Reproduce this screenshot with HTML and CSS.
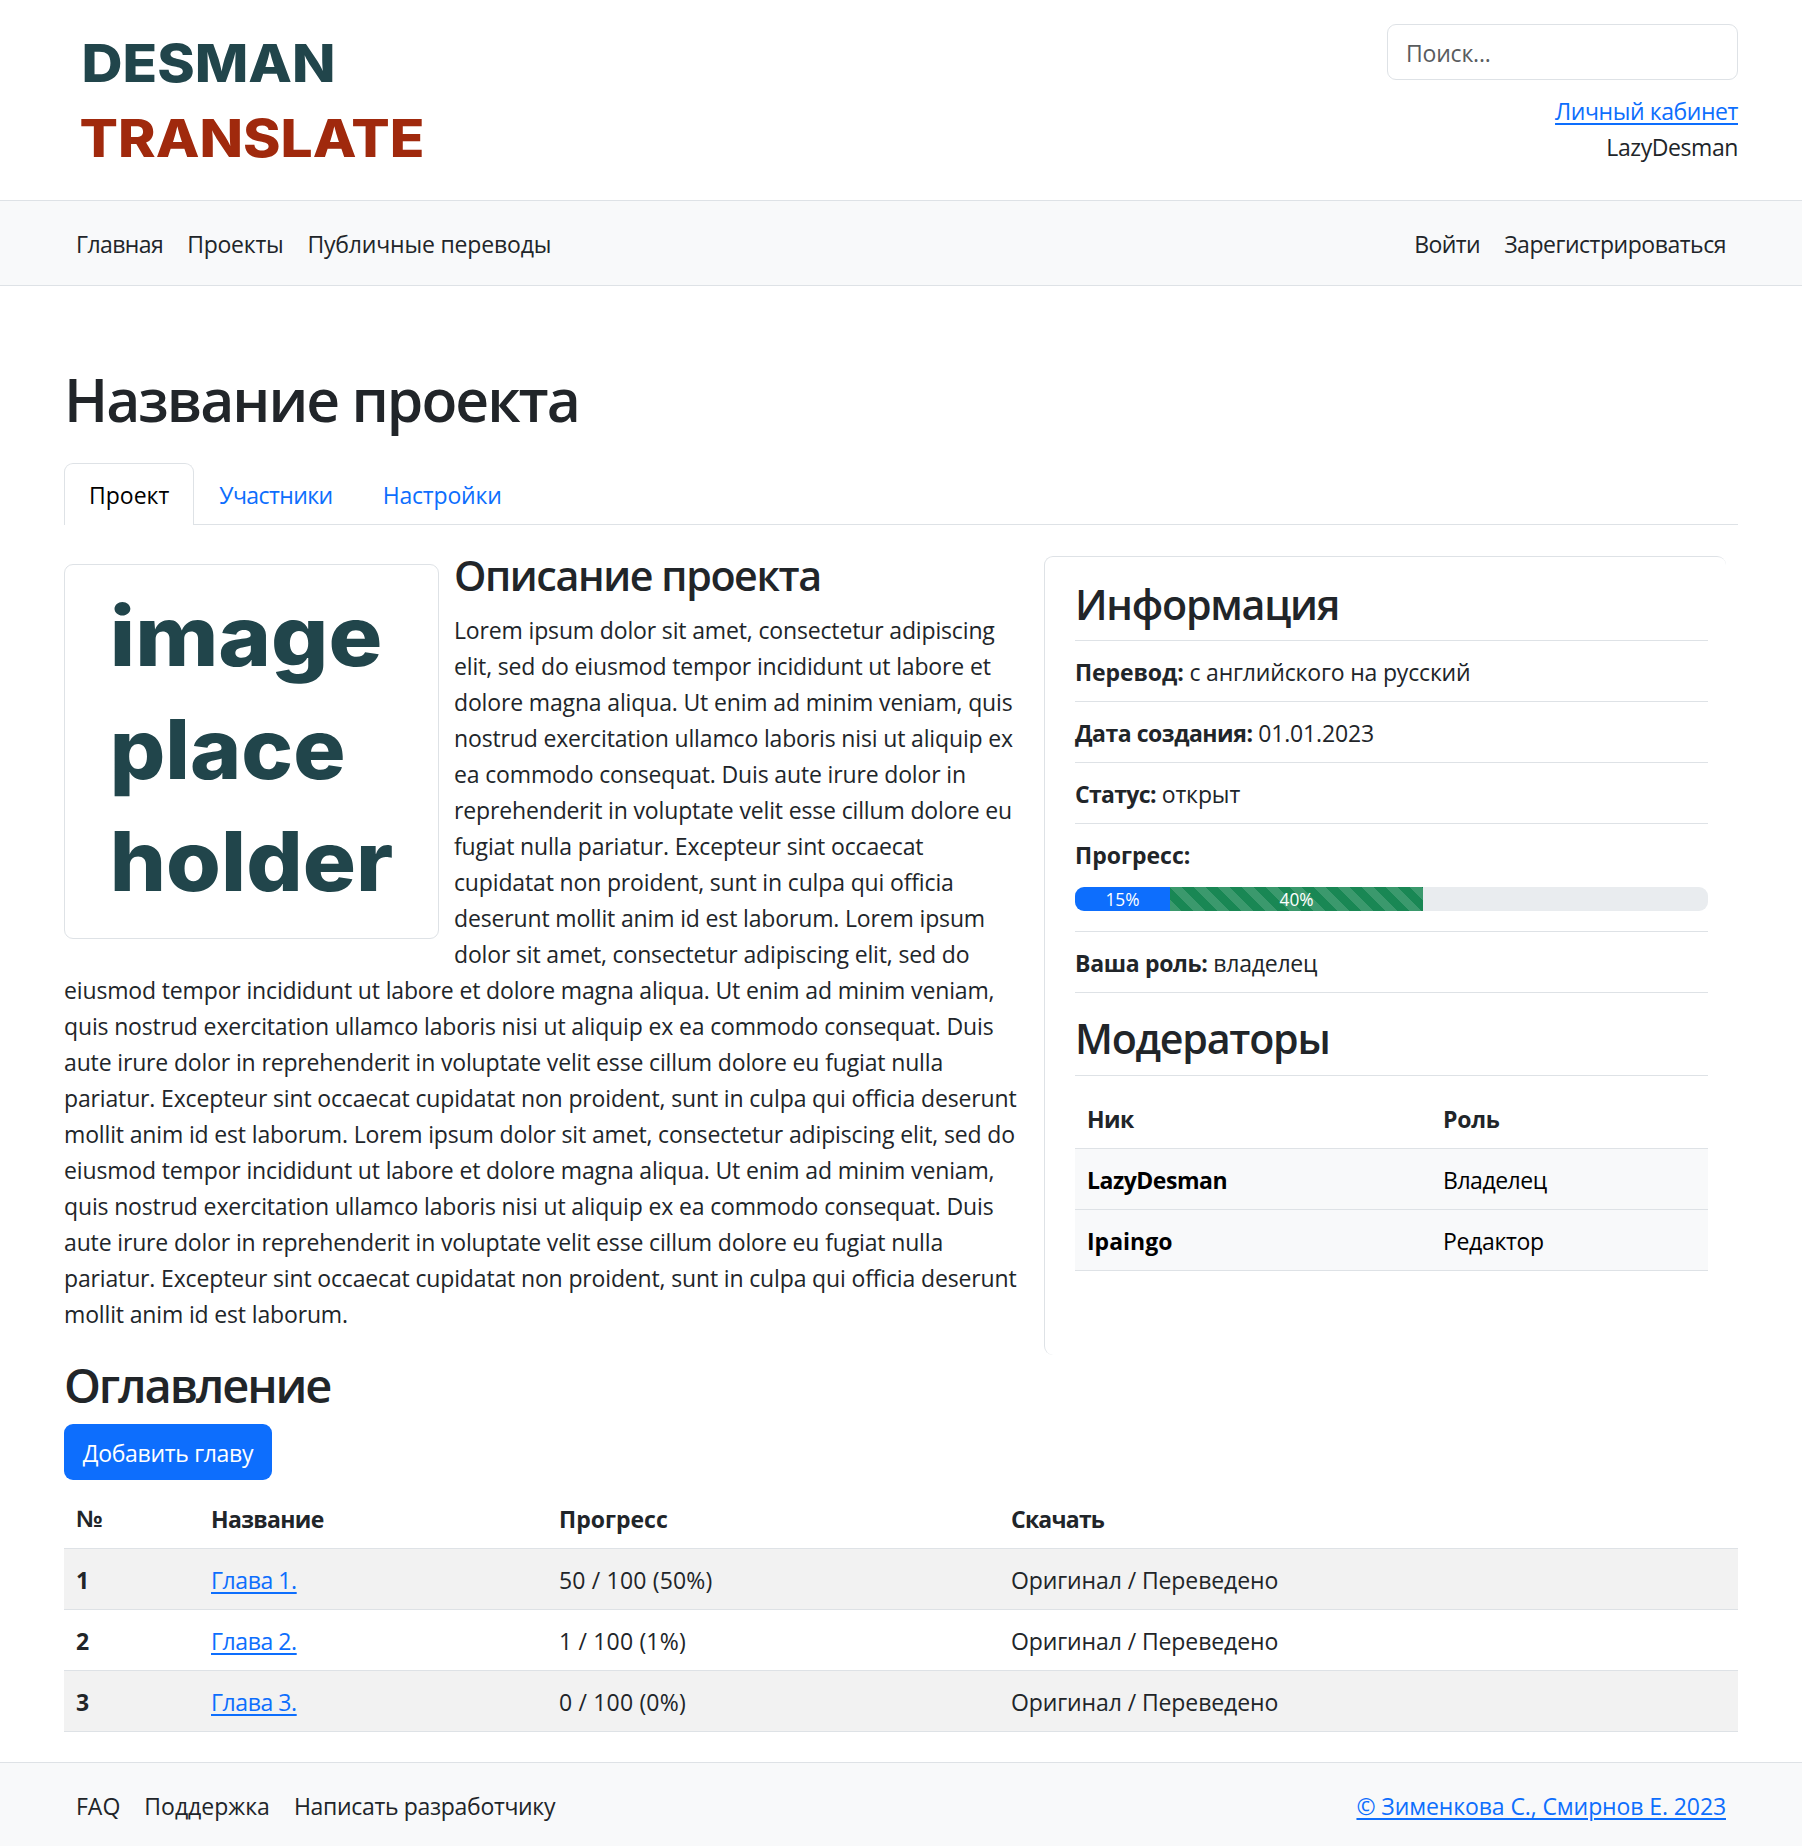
FILE: index.html
```html
<!DOCTYPE html>
<html lang="ru">
<head>
<meta charset="utf-8">
<title>Название проекта</title>
<link rel="stylesheet" href="styles.css">
</head>
<body>
<header class="header">
  <svg class="logo" width="380" height="150" viewBox="0 0 380 150" role="img" aria-label="Desman Translate">
    <text class="logo-top" x="17.5" y="57.5" textLength="254" lengthAdjust="spacingAndGlyphs">DESMAN</text>
    <text class="logo-bottom" x="15.5" y="132.5" textLength="345" lengthAdjust="spacingAndGlyphs">TRANSLATE</text>
  </svg>
  <div class="account">
    <input class="search" type="text" placeholder="Поиск...">
    <a class="link ls-40" href="#">Личный кабинет</a>
    <span class="ls-40">LazyDesman</span>
  </div>
</header>
<nav class="bar">
  <div class="bar-group"><a class="ls-55" href="#">Главная</a><a class="ls-25" href="#">Проекты</a><a class="ls-20" href="#">Публичные переводы</a></div>
  <div class="bar-group"><a class="ls-55" href="#">Войти</a><a class="ls-45" href="#">Зарегистрироваться</a></div>
</nav>
<main class="main">
  <h1>Название проекта</h1>
  <div class="tabs"><a class="tab active" href="#">Проект</a><a class="tab ls-55" href="#">Участники</a><a class="tab ls-20" href="#">Настройки</a></div>
  <div class="columns">
    <section class="description">
      <svg class="cover" width="375" height="375" viewBox="0 0 375 375" role="img" aria-label="image place holder">
        <text x="45" y="102" textLength="274" lengthAdjust="spacingAndGlyphs">image</text>
        <text x="45" y="215" textLength="237" lengthAdjust="spacingAndGlyphs">place</text>
        <text x="45" y="328" textLength="285" lengthAdjust="spacingAndGlyphs">holder</text>
      </svg>
      <h2>Описание проекта</h2>
      <p>Lorem ipsum dolor sit amet, consectetur adipiscing elit, sed do eiusmod tempor incididunt ut labore et dolore magna aliqua. Ut enim ad minim veniam, quis nostrud exercitation ullamco laboris nisi ut aliquip ex ea commodo consequat. Duis aute irure dolor in reprehenderit in voluptate velit esse cillum dolore eu fugiat nulla pariatur. Excepteur sint occaecat cupidatat non proident, sunt in culpa qui officia deserunt mollit anim id est laborum. Lorem ipsum dolor sit amet, consectetur adipiscing elit, sed do eiusmod tempor incididunt ut labore et dolore magna aliqua. Ut enim ad minim veniam, quis nostrud exercitation ullamco laboris nisi ut aliquip ex ea commodo consequat. Duis aute irure dolor in reprehenderit in voluptate velit esse cillum dolore eu fugiat nulla pariatur. Excepteur sint occaecat cupidatat non proident, sunt in culpa qui officia deserunt mollit anim id est laborum. Lorem ipsum dolor sit amet, consectetur adipiscing elit, sed do eiusmod tempor incididunt ut labore et dolore magna aliqua. Ut enim ad minim veniam, quis nostrud exercitation ullamco laboris nisi ut aliquip ex ea commodo consequat. Duis aute irure dolor in reprehenderit in voluptate velit esse cillum dolore eu fugiat nulla pariatur. Excepteur sint occaecat cupidatat non proident, sunt in culpa qui officia deserunt mollit anim id est laborum.</p>
    </section>
    <aside class="info">
      <h2>Информация</h2>
      <div class="info-row ls-20"><b class="ls-10">Перевод:</b> с английского на русский</div>
      <div class="info-row ls-20"><b class="ls-45">Дата создания:</b> 01.01.2023</div>
      <div class="info-row ls-10"><b class="ls-65">Статус:</b> открыт</div>
      <div class="info-row info-progress"><b>Прогресс:</b>
        <div class="progress"><div class="progress-part" style="width:15%">15%</div><div class="progress-part striped" style="width:40%">40%</div></div>
      </div>
      <div class="info-row ls-25"><b class="ls-30">Ваша роль:</b> владелец</div>
      <h2 class="moderators-title">Модераторы</h2>
      <table class="table moderators">
        <thead><tr><th class="ls-55">Ник</th><th class="ls-25">Роль</th></tr></thead>
        <tbody>
          <tr><th class="ls-45">LazyDesman</th><td class="ls-45">Владелец</td></tr>
          <tr><th>Ipaingo</th><td class="ls-30">Редактор</td></tr>
        </tbody>
      </table>
    </aside>
  </div>
  <h2 class="contents-title">Оглавление</h2>
  <button class="button ls-30" type="button">Добавить главу</button>
  <table class="table chapters">
    <thead><tr><th class="numero">№</th><th class="ls-65">Название</th><th>Прогресс</th><th class="ls-75">Скачать</th></tr></thead>
    <tbody>
      <tr><th>1</th><td><a class="link ls-40" href="#">Глава 1.</a></td><td class="count">50 / 100 (50%)</td><td class="ls-10">Оригинал / Переведено</td></tr>
      <tr><th>2</th><td><a class="link ls-40" href="#">Глава 2.</a></td><td class="count">1 / 100 (1%)</td><td class="ls-10">Оригинал / Переведено</td></tr>
      <tr><th>3</th><td><a class="link ls-40" href="#">Глава 3.</a></td><td class="count">0 / 100 (0%)</td><td class="ls-10">Оригинал / Переведено</td></tr>
    </tbody>
  </table>
</main>
<footer class="bar footer">
  <div class="bar-group"><a href="#">FAQ</a><a href="#">Поддержка</a><a class="ls-30" href="#">Написать разработчику</a></div>
  <div class="bar-group"><a class="link ls-10" href="#">© Зименкова С., Смирнов Е. 2023</a></div>
</footer>
</body>
</html>
```
FILE: styles.css
```css
* { box-sizing: border-box; }
body {
  margin: 0;
  background: #fff;
  color: #212529;
  font: 23px/36px "Open Sans", "Noto Sans", sans-serif;
}
a { color: inherit; text-decoration: none; }
h1, h2, p { margin: 0; }
h1, h2 { font-weight: 600; white-space: nowrap; }

/* Tracking steps, in hundredths of a pixel */
.ls-10 { letter-spacing: -.1px; }
.ls-20 { letter-spacing: -.17px; }
.ls-25 { letter-spacing: -.25px; }
.ls-30 { letter-spacing: -.32px; }
.ls-40 { letter-spacing: -.42px; }
.ls-45 { letter-spacing: -.47px; }
.ls-55 { letter-spacing: -.57px; }
.ls-65 { letter-spacing: -.67px; }
.ls-75 { letter-spacing: -.77px; }

.link {
  color: #0d6efd;
  text-decoration: underline;
  text-decoration-thickness: 2px;
  text-underline-offset: 3px;
}

/* Header */
.header {
  display: flex;
  justify-content: space-between;
  height: 200px;
  padding: 24px 64px 0;
}
.logo { display: block; font-family: Inter, sans-serif; font-size: 52px; font-weight: 800; }
.logo-top { fill: #21454b; }
.logo-bottom { fill: #a0290d; }
.account {
  display: flex;
  flex-direction: column;
  align-items: flex-end;
}
.search {
  width: 351px;
  height: 56px;
  margin-bottom: 13px;
  padding: 2px 18px 0;
  border: 1px solid #dee2e6;
  border-radius: 9px;
  background: #fff;
  font: inherit;
  letter-spacing: -.2px;
}
.search::placeholder { color: #595c5f; opacity: 1; }

/* Navigation and footer bars */
.bar {
  display: flex;
  justify-content: space-between;
  height: 86px;
  padding: 25px 64px 0;
  border: solid #dee2e6;
  border-width: 1px 0;
  background: #f8f9fa;
}
.bar-group { display: flex; }
.bar-group a { margin: 0 12px; }
.footer { height: 84px; margin-top: 30px; border-bottom: 0; }

/* Page */
.main { padding: 77px 64px 0; }
h1 { height: 100px; font-size: 58.8px; line-height: 72px; letter-spacing: -2px; }
h2 { font-size: 41.2px; line-height: 50px; letter-spacing: -1.25px; }
.tabs {
  display: flex;
  height: 62px;
  border-bottom: 1px solid #dee2e6;
}
.tab {
  height: 62px;
  padding: 13px 24px 0;
  border: 1px solid transparent;
  border-bottom: 0;
  color: #0d6efd;
}
.tab.active {
  border-color: #dee2e6;
  border-radius: 9px 9px 0 0;
  background: #fff;
  color: #000;
}
.columns {
  display: flex;
  align-items: flex-start;
  justify-content: space-between;
  height: 830px;
  padding: 25px 12px 0 0;
}
.description { width: 956px; }
.description h2 { margin-bottom: 12px; letter-spacing: -1.4px; }
.description p { letter-spacing: -.15px; }
.cover {
  float: left;
  margin: 14px 15px 15px 0;
  border: 1px solid #dee2e6;
  border-radius: 9px;
  fill: #21454b;
  font-family: Inter, sans-serif;
  font-size: 83px;
  font-weight: 800;
}

/* Project information */
.info {
  width: 682px;
  height: 799px;
  margin-top: 6px;
  padding: 22px 18px 0 30px;
  border: solid #dee2e6;
  border-width: 1px 0 0 1px;
  border-radius: 9px;
}
.info h2 { height: 62px; border-bottom: 1px solid #dee2e6; }
.info-row {
  height: 61px;
  padding-top: 13px;
  border-bottom: 1px solid #dee2e6;
}
.info-progress { height: 108px; }
.progress {
  display: flex;
  height: 24px;
  margin-top: 14px;
  overflow: hidden;
  border-radius: 9px;
  background: #e9ecef;
}
.progress-part {
  background-color: #0d6efd;
  color: #fff;
  font-size: 17.3px;
  line-height: 25px;
  text-align: center;
}
.progress-part.striped {
  background-color: #198754;
  background-image: linear-gradient(45deg, rgba(255,255,255,.15) 25%, transparent 25%, transparent 50%, rgba(255,255,255,.15) 50%, rgba(255,255,255,.15) 75%, transparent 75%, transparent);
  background-size: 24px 24px;
}
.info .moderators-title { height: 83px; padding-top: 20px; }

/* Tables */
.table {
  width: 100%;
  border-collapse: separate;
  border-spacing: 0;
  table-layout: fixed;
}
.table th, .table td {
  height: 61px;
  padding: 13px 12px 11px;
  border-bottom: 1px solid #dee2e6;
  text-align: left;
}
.moderators { margin-top: 12px; }
.moderators th:first-child { width: 356px; }
.moderators tbody { color: #000; }
.moderators tbody tr { background: #f8f9fa; }
.contents-title {
  height: 69px;
  padding-top: 1px;
  font-size: 47px;
  line-height: 58px;
  letter-spacing: -2.15px;
}
.button {
  display: block;
  width: 208px;
  height: 56px;
  padding: 2px 0 0;
  border: 0;
  border-radius: 9px;
  background: #0d6efd;
  color: #fff;
  font: inherit;
}
.chapters { margin-top: 8px; }
.chapters th:nth-child(1) { width: 135px; }
.chapters th:nth-child(2) { width: 348px; }
.chapters th:nth-child(3) { width: 452px; }
.chapters tbody tr:nth-child(odd) { background: #f2f2f2; }
.count { letter-spacing: .18px; }
.table .numero { font-family: "Liberation Sans", sans-serif; font-size: 24px; }
```
